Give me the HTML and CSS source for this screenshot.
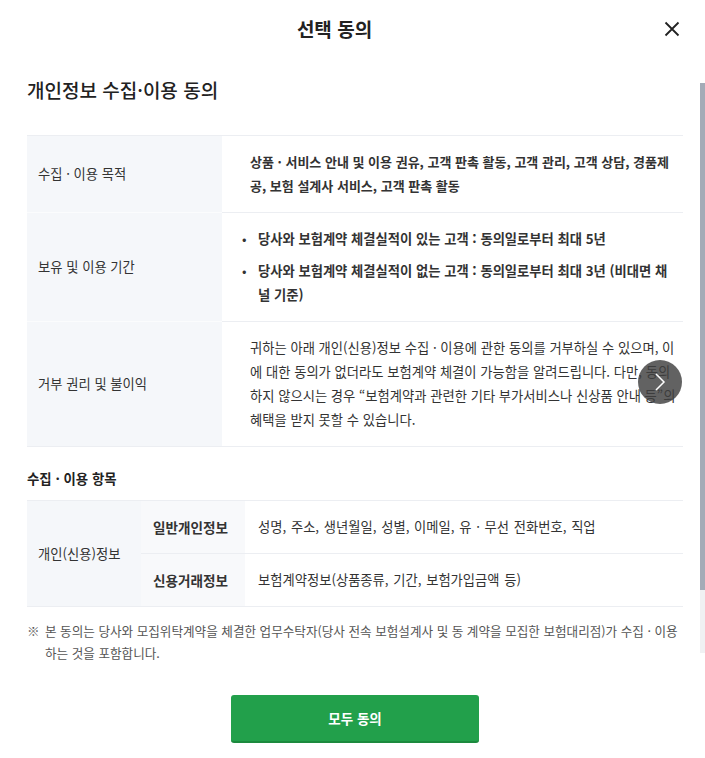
FILE: index.html
```html
<!DOCTYPE html>
<html lang="ko">
<head>
    <meta charset="UTF-8">
    <meta name="viewport" content="width=device-width, initial-scale=1.0">
    <title>선택 동의</title>
    <link rel="stylesheet" href="styles.css">
</head>
<body>
    <div class="modal">
        <div class="modal_head">
            <h2 class="modal_title">선택 동의</h2>
            <button class="close_btn" aria-label="닫기">
                <svg width="16" height="16" viewBox="0 0 16 16">
                    <path d="M1.5 1.5 L14.5 14.5 M14.5 1.5 L1.5 14.5" stroke="#222" stroke-width="1.8" fill="none"/>
                </svg>
            </button>
        </div>

        <div class="modal_body">
            <h3 class="terms_title">개인정보 수집·이용 동의</h3>

            <div class="table_wrap">
                <table class="terms_table">
                    <colgroup>
                        <col class="col_head">
                        <col>
                    </colgroup>
                    <tr>
                        <th>수집 · 이용 목적</th>
                        <td class="strong">상품 · 서비스 안내 및 이용 권유, 고객 판촉 활동, 고객 관리, 고객 상담, 경품제공, 보험 설계사 서비스, 고객 판촉 활동</td>
                    </tr>
                    <tr>
                        <th>보유 및 이용 기간</th>
                        <td class="strong period">
                            <ul class="dot_list">
                                <li><span class="dot">•</span><span>당사와 보험계약 체결실적이 있는 고객 : 동의일로부터 최대 5년</span></li>
                                <li><span class="dot">•</span><span>당사와 보험계약 체결실적이 없는 고객 : 동의일로부터 최대 3년 (비대면 채널 기준)</span></li>
                            </ul>
                        </td>
                    </tr>
                    <tr>
                        <th>거부 권리 및 불이익</th>
                        <td>귀하는 아래 개인(신용)정보 수집 · 이용에 관한 동의를 거부하실 수 있으며, 이에 대한 동의가 없더라도 보험계약 체결이 가능함을 알려드립니다. 다만, 동의하지 않으시는 경우 “보험계약과 관련한 기타 부가서비스나 신상품 안내 등”의 혜택을 받지 못할 수 있습니다.</td>
                    </tr>
                </table>
                <button class="next_btn" aria-label="다음">
                    <svg width="12" height="20" viewBox="0 0 12 20">
                        <path d="M2 2 L10 10 L2 18" stroke="#fff" stroke-width="1.5" fill="none"/>
                    </svg>
                </button>
            </div>

            <h4 class="sub_title">수집 · 이용 항목</h4>

            <table class="items_table">
                <colgroup>
                    <col class="col_group">
                    <col class="col_kind">
                    <col>
                </colgroup>
                <tr>
                    <th rowspan="2">개인(신용)정보</th>
                    <th class="kind">일반개인정보</th>
                    <td>성명, 주소, 생년월일, 성별, 이메일, 유 · 무선 전화번호, 직업</td>
                </tr>
                <tr>
                    <th class="kind">신용거래정보</th>
                    <td>보험계약정보(상품종류, 기간, 보험가입금액 등)</td>
                </tr>
            </table>

            <p class="note"><span class="note_mark">※</span><span>본 동의는 당사와 모집위탁계약을 체결한 업무수탁자(당사 전속 보험설계사 및 동 계약을 모집한 보험대리점)가 수집 · 이용하는 것을 포함합니다.</span></p>

            <div class="btn_area">
                <button class="agree_btn">모두 동의</button>
            </div>
        </div>

        <div class="scrollbar"><div class="scroll_thumb"></div></div>
    </div>
</body>
</html>
```

FILE: styles.css
```css
body {
    margin: 0;
    background: #ffffff;
    color: #222222;
    font-family: "Noto Sans CJK KR", "Noto Sans", sans-serif;
}

.modal {
    position: relative;
    width: 705px;
    height: 758px;
    overflow: hidden;
}

.modal_head {
    height: 58px;
    padding-right: 36px;
    display: flex;
    align-items: center;
    justify-content: center;
    position: relative;
}

.modal_title {
    margin: 0;
    font-size: 19px;
    font-weight: 700;
    line-height: 26px;
    color: #222222;
}

.close_btn {
    position: absolute;
    top: 21px;
    right: 25px;
    width: 16px;
    height: 16px;
    padding: 0;
    border: 0;
    background: none;
    cursor: pointer;
    display: flex;
}

.modal_body {
    padding: 19px 22px 0 27px;
}

.terms_title {
    margin: 0 0 32px;
    font-size: 19px;
    font-weight: 500;
    line-height: 26px;
    color: #222222;
}

.table_wrap {
    position: relative;
}

table {
    width: 100%;
    border-collapse: collapse;
    table-layout: fixed;
    font-size: 13.3px;
    line-height: 24px;
    color: #333333;
}

th,
td {
    text-align: left;
    vertical-align: middle;
    border-bottom: 1px solid #eceef2;
}

tr:first-child th,
tr:first-child td {
    border-top: 1px solid #eceef2;
}

.terms_table th {
    font-weight: 400;
    background: #f5f7fa;
    padding: 14px 11px;
    border-bottom-color: #fbfcfd;
}

.terms_table tr:last-child th {
    border-bottom-color: #eceef2;
}

.terms_table td {
    padding: 14px 6px 14px 28px;
}

.terms_table .strong {
    font-size: 13px;
    font-weight: 700;
}

.terms_table .period {
    font-size: 13.3px;
}

.col_head {
    width: 195px;
}

.dot_list {
    margin: 0 0 0 -8px;
    padding: 0;
    list-style: none;
    display: flex;
    flex-direction: column;
    gap: 8px;
}

.dot_list li {
    display: flex;
}

.dot {
    flex: 0 0 16px;
    font-weight: 400;
}

.next_btn {
    position: absolute;
    top: 225px;
    right: 1px;
    width: 44px;
    height: 44px;
    padding: 0;
    border: 0;
    border-radius: 50%;
    background: rgba(64, 64, 64, 0.82);
    display: flex;
    align-items: center;
    justify-content: center;
    cursor: pointer;
}

.sub_title {
    margin: 21px 0 12px;
    font-size: 13.4px;
    font-weight: 700;
    line-height: 20px;
    color: #222222;
}

.col_group {
    width: 114px;
}

.col_kind {
    width: 104px;
}

.items_table th {
    font-weight: 400;
    background: #f5f7fa;
    padding: 14px 11px;
}

.items_table .kind {
    font-size: 13.6px;
    font-weight: 700;
    background: #f8f9fb;
    padding: 14px 12px;
}

.items_table td {
    padding: 14px 13px;
    word-spacing: 1px;
}

.note {
    margin: 13px 0 0;
    display: flex;
    font-size: 12.6px;
    line-height: 22px;
    color: #555555;
}

.note_mark {
    flex: 0 0 18px;
}

.btn_area {
    display: flex;
    justify-content: center;
    margin-top: 31px;
}

.agree_btn {
    width: 248px;
    height: 48px;
    border: 0;
    border-bottom: 2px solid #1c8a3e;
    border-radius: 3px;
    background: #22a04b;
    color: #ffffff;
    font-family: inherit;
    font-size: 13.5px;
    font-weight: 700;
    cursor: pointer;
}

.scrollbar {
    position: absolute;
    top: 83px;
    right: 0;
    width: 5px;
    height: 570px;
    background: #f0f1f3;
}

.scroll_thumb {
    height: 507px;
    background: #a4abb7;
}
```
